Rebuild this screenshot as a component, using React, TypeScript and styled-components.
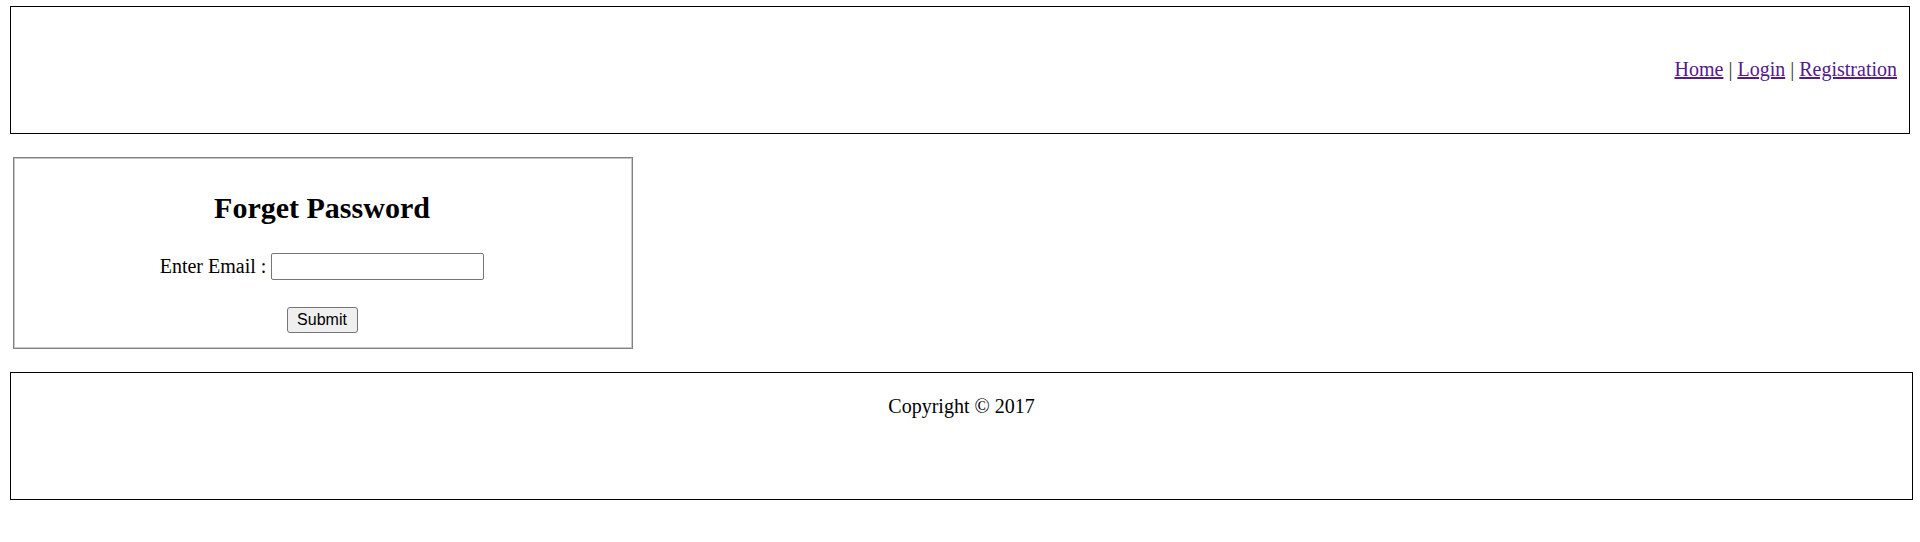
import styled, { createGlobalStyle } from "styled-components";

const GlobalStyle = createGlobalStyle`
  html, body {
    margin: 0;
    padding: 0;
    background: #ffffff;
  }
  body {
    padding: 6px 10px 0 10px;
    font-family: "Liberation Serif", "Times New Roman", serif;
    font-size: 20px;
    color: #000000;
  }
`;

const Page = styled.div`
  display: flex;
  flex-direction: column;
  align-items: flex-start;
`;

const Header = styled.div`
  box-sizing: border-box;
  width: 1900px;
  height: 128px;
  border: 1px solid #000000;
  display: flex;
  align-items: center;
  justify-content: flex-end;
  padding: 0 12px 2px 0;
`;

const NavLink = styled.a`
  color: #551a8b;
  text-decoration: underline;
  cursor: pointer;
`;

const Separator = styled.span`
  color: #333333;
  margin: 0 5px;
`;

const FormBox = styled.div`
  box-sizing: border-box;
  margin: 23px 0 0 3px;
  width: 620px;
  height: 192px;
  border: 1px solid #808080;
  box-shadow: inset 0 0 0 1px #c8c8c8;
  display: flex;
  flex-direction: column;
  align-items: center;
  padding: 33px 2px 0 0;
`;

const Title = styled.h2`
  margin: 0;
  font-size: 30px;
  font-weight: bold;
  line-height: 34px;
`;

const Row = styled.div`
  margin-top: 28px;
  display: flex;
  align-items: center;
  height: 27px;
`;

const Label = styled.label`
  margin-right: 5px;
`;

const EmailInput = styled.input`
  box-sizing: border-box;
  width: 213px;
  height: 27px;
  border: 1px solid #767676;
  border-radius: 2px;
  padding: 1px 3px;
  font-family: "Liberation Sans", Arial, sans-serif;
  font-size: 16px;
  outline: none;
`;

const SubmitButton = styled.button`
  box-sizing: border-box;
  margin-top: 27px;
  width: 71px;
  height: 26px;
  background: #efefef;
  border: 1px solid #767676;
  border-radius: 3px;
  font-family: "Liberation Sans", Arial, sans-serif;
  font-size: 16px;
  color: #000000;
  padding: 0;
  cursor: pointer;
`;

const Footer = styled.div`
  box-sizing: border-box;
  margin-top: 23px;
  width: 1903px;
  height: 128px;
  border: 1px solid #000000;
  text-align: center;
  padding-top: 22px;
  line-height: 23px;
`;

export default function App() {
  return (
    <>
      <GlobalStyle />
      <Page>
        <Header>
          <span>
            <NavLink>Home</NavLink>
            <Separator>|</Separator>
            <NavLink>Login</NavLink>
            <Separator>|</Separator>
            <NavLink>Registration</NavLink>
          </span>
        </Header>
        <FormBox>
          <Title>Forget Password</Title>
          <Row>
            <Label>Enter Email :</Label>
            <EmailInput type="text" />
          </Row>
          <SubmitButton type="button">Submit</SubmitButton>
        </FormBox>
        <Footer>Copyright © 2017</Footer>
      </Page>
    </>
  );
}
